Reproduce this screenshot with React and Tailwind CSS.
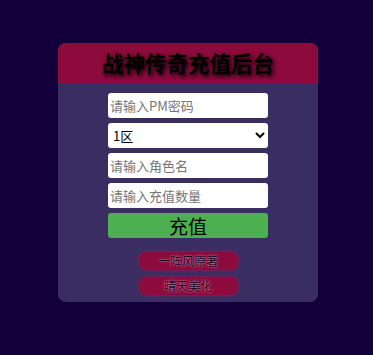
export default function App() {
  return (
    <div
      className="min-h-[355px] w-full bg-[#13003a] pt-[43px]"
      style={{ fontFamily: '"Microsoft YaHei", "Noto Sans CJK SC", sans-serif' }}
    >
      <div className="ml-[58px] w-[260px] h-[259px] overflow-hidden rounded-lg bg-[#3a2d61]">
        <div className="flex h-[40px] items-center justify-center bg-[#8c0a3c]">
          <h1 className="text-[21.5px] font-bold text-black [text-shadow:2px_2px_4px_#000]">
            战神传奇充值后台
          </h1>
        </div>
        <form className="flex flex-col items-center gap-[5px] pt-[10px]">
          <input
            type="password"
            placeholder="请输入PM密码"
            className="h-[25px] w-[160px] rounded-[3px] bg-white px-[2px] text-[13px] text-black placeholder:text-[#757575] outline-none"
          />
          <select className="h-[25px] w-[160px] rounded-[3px] bg-white px-[1px] text-[13px] text-black outline-none">
            <option>1区</option>
            <option>2区</option>
          </select>
          <input
            type="text"
            placeholder="请输入角色名"
            className="h-[25px] w-[160px] rounded-[3px] bg-white px-[2px] text-[13px] text-black placeholder:text-[#757575] outline-none"
          />
          <input
            type="text"
            placeholder="请输入充值数量"
            className="h-[25px] w-[160px] rounded-[3px] bg-white px-[2px] text-[13px] text-black placeholder:text-[#757575] outline-none"
          />
          <button
            type="button"
            className="h-[25px] w-[160px] rounded-[3px] bg-[#4caf50] text-[19px] leading-[25px] text-black"
          >
            充值
          </button>
          <div className="mt-[9px] flex flex-col items-center gap-[7px]">
            <button
              type="button"
              className="h-[18px] w-[99px] rounded-lg bg-[#8c0a3c] text-[12px] leading-[18px] text-[#1a0020] shadow-[0_0_3px_#c0105a] [text-shadow:0_0_2px_#ffc0e0]"
            >
              一阵风原著
            </button>
            <button
              type="button"
              className="h-[18px] w-[99px] rounded-lg bg-[#8c0a3c] text-[12px] leading-[18px] text-[#1a0020] shadow-[0_0_3px_#c0105a] [text-shadow:0_0_2px_#ffc0e0]"
            >
              晴天美化
            </button>
          </div>
        </form>
      </div>
    </div>
  );
}
